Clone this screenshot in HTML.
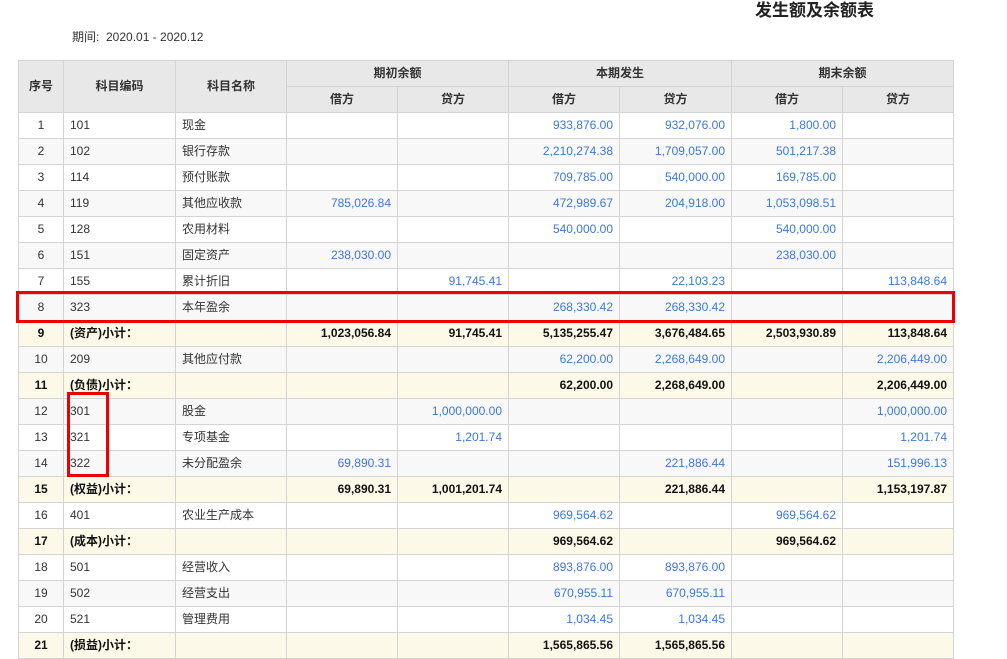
<!DOCTYPE html>
<html><head><meta charset="utf-8">
<style>
body{margin:0;width:1007px;height:655px;overflow:hidden;background:#fff;font-family:"Liberation Sans","Noto Sans CJK SC",sans-serif;font-size:12px;color:#333;position:relative}
.title{position:absolute;left:755px;top:0px;font-size:17px;font-weight:bold;color:#222;line-height:22px}
.period{position:absolute;left:72px;top:29px;font-size:12px;color:#333;line-height:16px}
table{position:absolute;left:18px;top:60px;border-collapse:collapse;table-layout:fixed}
td,th{border:1px solid #d4d4d4;height:25px;padding:0 6px;white-space:nowrap;overflow:hidden;line-height:25px}
th{background:#e8e8e8;font-weight:bold;color:#333;text-align:center}
td.c{text-align:center}
td.r{text-align:right;color:#3d78d6}
tr.e td{background:#f8f8f8}
tr.s td{background:#fdf9e8;font-weight:bold;color:#111}
tr.s td.r{color:#111}
.box1{position:absolute;left:16px;top:291px;width:933px;height:26px;border:3px solid #e00}
.box2{position:absolute;left:67px;top:392px;width:36px;height:79px;border:3px solid #e00}
</style></head><body>
<div class="title">发生额及余额表</div>
<div class="period">期间:&nbsp; 2020.01 - 2020.12</div>
<table>
<colgroup><col style="width:45px"><col style="width:112px"><col style="width:111px"><col style="width:111px"><col style="width:111px"><col style="width:111px"><col style="width:112px"><col style="width:111px"><col style="width:111px"></colgroup>
<tr><th rowspan="2">序号</th><th rowspan="2">科目编码</th><th rowspan="2">科目名称</th><th colspan="2">期初余额</th><th colspan="2">本期发生</th><th colspan="2">期末余额</th></tr>
<tr><th>借方</th><th>贷方</th><th>借方</th><th>贷方</th><th>借方</th><th>贷方</th></tr>
<tr><td class="c">1</td><td>101</td><td>现金</td><td class="r"></td><td class="r"></td><td class="r">933,876.00</td><td class="r">932,076.00</td><td class="r">1,800.00</td><td class="r"></td></tr>
<tr class="e"><td class="c">2</td><td>102</td><td>银行存款</td><td class="r"></td><td class="r"></td><td class="r">2,210,274.38</td><td class="r">1,709,057.00</td><td class="r">501,217.38</td><td class="r"></td></tr>
<tr><td class="c">3</td><td>114</td><td>预付账款</td><td class="r"></td><td class="r"></td><td class="r">709,785.00</td><td class="r">540,000.00</td><td class="r">169,785.00</td><td class="r"></td></tr>
<tr class="e"><td class="c">4</td><td>119</td><td>其他应收款</td><td class="r">785,026.84</td><td class="r"></td><td class="r">472,989.67</td><td class="r">204,918.00</td><td class="r">1,053,098.51</td><td class="r"></td></tr>
<tr><td class="c">5</td><td>128</td><td>农用材料</td><td class="r"></td><td class="r"></td><td class="r">540,000.00</td><td class="r"></td><td class="r">540,000.00</td><td class="r"></td></tr>
<tr class="e"><td class="c">6</td><td>151</td><td>固定资产</td><td class="r">238,030.00</td><td class="r"></td><td class="r"></td><td class="r"></td><td class="r">238,030.00</td><td class="r"></td></tr>
<tr><td class="c">7</td><td>155</td><td>累计折旧</td><td class="r"></td><td class="r">91,745.41</td><td class="r"></td><td class="r">22,103.23</td><td class="r"></td><td class="r">113,848.64</td></tr>
<tr class="e"><td class="c">8</td><td>323</td><td>本年盈余</td><td class="r"></td><td class="r"></td><td class="r">268,330.42</td><td class="r">268,330.42</td><td class="r"></td><td class="r"></td></tr>
<tr class="s"><td class="c">9</td><td>(资产)小计：</td><td></td><td class="r">1,023,056.84</td><td class="r">91,745.41</td><td class="r">5,135,255.47</td><td class="r">3,676,484.65</td><td class="r">2,503,930.89</td><td class="r">113,848.64</td></tr>
<tr class="e"><td class="c">10</td><td>209</td><td>其他应付款</td><td class="r"></td><td class="r"></td><td class="r">62,200.00</td><td class="r">2,268,649.00</td><td class="r"></td><td class="r">2,206,449.00</td></tr>
<tr class="s"><td class="c">11</td><td>(负债)小计：</td><td></td><td class="r"></td><td class="r"></td><td class="r">62,200.00</td><td class="r">2,268,649.00</td><td class="r"></td><td class="r">2,206,449.00</td></tr>
<tr class="e"><td class="c">12</td><td>301</td><td>股金</td><td class="r"></td><td class="r">1,000,000.00</td><td class="r"></td><td class="r"></td><td class="r"></td><td class="r">1,000,000.00</td></tr>
<tr><td class="c">13</td><td>321</td><td>专项基金</td><td class="r"></td><td class="r">1,201.74</td><td class="r"></td><td class="r"></td><td class="r"></td><td class="r">1,201.74</td></tr>
<tr class="e"><td class="c">14</td><td>322</td><td>未分配盈余</td><td class="r">69,890.31</td><td class="r"></td><td class="r"></td><td class="r">221,886.44</td><td class="r"></td><td class="r">151,996.13</td></tr>
<tr class="s"><td class="c">15</td><td>(权益)小计：</td><td></td><td class="r">69,890.31</td><td class="r">1,001,201.74</td><td class="r"></td><td class="r">221,886.44</td><td class="r"></td><td class="r">1,153,197.87</td></tr>
<tr><td class="c">16</td><td>401</td><td>农业生产成本</td><td class="r"></td><td class="r"></td><td class="r">969,564.62</td><td class="r"></td><td class="r">969,564.62</td><td class="r"></td></tr>
<tr class="s"><td class="c">17</td><td>(成本)小计：</td><td></td><td class="r"></td><td class="r"></td><td class="r">969,564.62</td><td class="r"></td><td class="r">969,564.62</td><td class="r"></td></tr>
<tr><td class="c">18</td><td>501</td><td>经营收入</td><td class="r"></td><td class="r"></td><td class="r">893,876.00</td><td class="r">893,876.00</td><td class="r"></td><td class="r"></td></tr>
<tr class="e"><td class="c">19</td><td>502</td><td>经营支出</td><td class="r"></td><td class="r"></td><td class="r">670,955.11</td><td class="r">670,955.11</td><td class="r"></td><td class="r"></td></tr>
<tr><td class="c">20</td><td>521</td><td>管理费用</td><td class="r"></td><td class="r"></td><td class="r">1,034.45</td><td class="r">1,034.45</td><td class="r"></td><td class="r"></td></tr>
<tr class="s"><td class="c">21</td><td>(损益)小计：</td><td></td><td class="r"></td><td class="r"></td><td class="r">1,565,865.56</td><td class="r">1,565,865.56</td><td class="r"></td><td class="r"></td></tr>
</table>
<div class="box1"></div>
<div class="box2"></div>
</body></html>
